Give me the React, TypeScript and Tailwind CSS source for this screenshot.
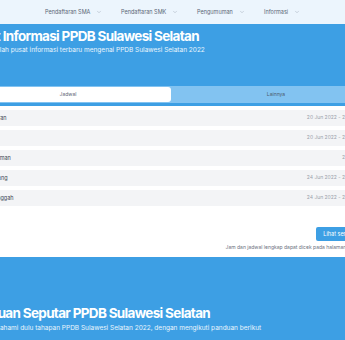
import React from 'react'
import { ChevronDown } from 'lucide-react'

const menu = [
  { label: 'Pendaftaran SMA', w: 'w-[76px]' },
  { label: 'Pendaftaran SMK', w: 'w-[76px]' },
  { label: 'Pengumuman', w: 'w-[67px]' },
  { label: 'Informasi', w: 'w-auto' },
]

const jadwal = [
  { name: 'Pendaftaran', date: '20 Jun 2022 - 25 Jun 2022' },
  { name: 'Seleksi', date: '20 Jun 2022 - 25 Jun 2022' },
  { name: 'Pengumuman', date: '23 Jun 2022' },
  { name: 'Daftar Ulang', date: '24 Jun 2022 - 28 Jun 2022' },
  { name: 'Masa Sanggah', date: '24 Jun 2022 - 28 Jun 2022' },
]

const App = () => {
  return (
    <div className="w-[345px] h-[340px] overflow-hidden bg-white font-['Inter',sans-serif]">
      {/* top menu */}
      <nav className="h-[24px] bg-[#ecf5fd] flex items-center">
        <ul className="flex items-center ml-[45px]">
          {menu.map((m) => (
            <li key={m.label} className={`${m.w} flex items-center gap-[6px] text-[5.5px] text-[#5b6675]`}>
              {m.label}
              <ChevronDown size={6} strokeWidth={1.5} className="text-[#8a94a3]" />
            </li>
          ))}
        </ul>
      </nav>

      {/* info header */}
      <section className="bg-[#3d9fe4] pt-[4px] pb-[3px]">
        <div className="-ml-[34px]">
          <h1 className="text-[13.5px] font-bold tracking-[-0.05em] text-white leading-[16px] whitespace-nowrap">
            Pusat Informasi PPDB Sulawesi Selatan
          </h1>
          <p className="text-[6.5px] text-white/90 mt-[2px] -ml-[1px] whitespace-nowrap">
            Berikut adalah pusat informasi terbaru mengenai PPDB Sulawesi Selatan 2022
          </p>
        </div>
        <div className="-ml-[36px] w-[416px] mt-[30px] bg-[#82c3f1] p-[1px] flex gap-[2px]">
          <button className="flex-1 h-[15px] bg-white rounded-[3px] text-[5px] text-[#5b6675]">
            Jadwal
          </button>
          <button className="flex-1 h-[15px] rounded-[3px] text-[5px] text-[#4a5a6c]">
            Lainnya
          </button>
        </div>
      </section>

      {/* schedule list */}
      <div className="-ml-[33px] w-[413px] pt-[4px] flex flex-col gap-[4px]">
        {jadwal.map((j) => (
          <div key={j.name} className="h-[16px] bg-[#f3f4f6] rounded-[2px] px-[8px] flex items-center justify-between">
            <span className="text-[5.5px] text-[#3b4452]">{j.name}</span>
            <span className="text-[5px] text-[#9aa1ab]">{j.date}</span>
          </div>
        ))}
        <div className="flex flex-col items-end mt-[17px]">
          <button className="h-[14px] px-[7px] bg-[#3d9fe4] rounded-[2px] text-[5.5px] text-white">
            Lihat semua jadwal
          </button>
          <p className="mt-[3px] text-[5px] text-[#6b7280] whitespace-nowrap">
            Jam dan jadwal lengkap dapat dicek pada halaman pengumuman
          </p>
        </div>
      </div>

      {/* panduan */}
      <section className="mt-[6px] bg-[#3d9fe4] h-[200px] pt-[48px]">
        <div className="-ml-[33px]">
          <h2 className="text-[13.5px] font-bold tracking-[-0.05em] text-white leading-[16px] whitespace-nowrap">
            Panduan Seputar PPDB Sulawesi Selatan
          </h2>
          <p className="text-[6.5px] text-white/90 mt-[3px] ml-[5px] whitespace-nowrap">
            Silakan pahami dulu tahapan PPDB Sulawesi Selatan 2022, dengan mengikuti panduan berikut
          </p>
        </div>
      </section>
    </div>
  )
}

export default App
